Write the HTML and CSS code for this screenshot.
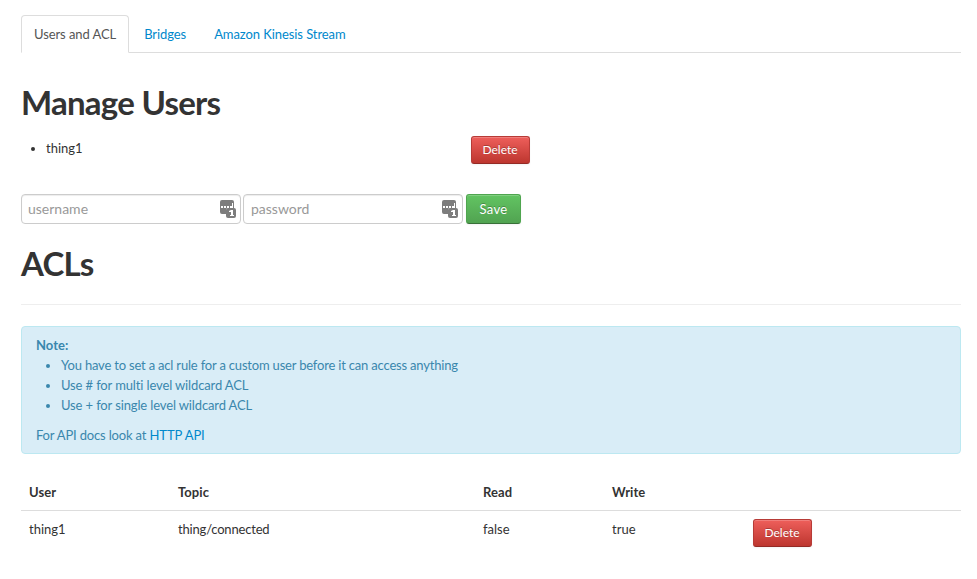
FILE: index.html
```html
<!DOCTYPE html>
<html lang="en">
<head>
<meta charset="utf-8">
<title>Manage Users</title>
<link rel="stylesheet" href="styles.css">
</head>
<body>
<ul class="tabs">
  <li class="active"><a>Users and ACL</a></li>
  <li><a>Bridges</a></li>
  <li><a>Amazon Kinesis Stream</a></li>
</ul>
<h1>Manage Users</h1>
<div class="user-row">
  <ul class="users"><li>thing1</li></ul>
  <button class="btn danger">Delete</button>
</div>
<form class="user-form">
  <label class="field"><input type="text" placeholder="username">
    <svg class="key" width="18" height="20" viewBox="0 0 18 20"><path fill="#7d7d7d" d="M3 1h10q2 0 2 2v6h-6q-2 0-2 2v4H3q-2 0-2-2V3q0-2 2-2z"/><path fill="#fff" d="M2 7h2v2H2zM5 7h2v2H5zM8 7h2v2H8zM11 7h2v2h-2zM13 4h1v5h-1z"/><rect x="7" y="9" width="10" height="10" rx="2" fill="#7d7d7d"/><path fill="#fff" d="M10 12l2-1h2v5h1v1h-4v-1h1v-3h-2z"/></svg></label>
  <label class="field"><input type="text" placeholder="password">
    <svg class="key" width="18" height="20" viewBox="0 0 18 20"><path fill="#7d7d7d" d="M3 1h10q2 0 2 2v6h-6q-2 0-2 2v4H3q-2 0-2-2V3q0-2 2-2z"/><path fill="#fff" d="M2 7h2v2H2zM5 7h2v2H5zM8 7h2v2H8zM11 7h2v2h-2zM13 4h1v5h-1z"/><rect x="7" y="9" width="10" height="10" rx="2" fill="#7d7d7d"/><path fill="#fff" d="M10 12l2-1h2v5h1v1h-4v-1h1v-3h-2z"/></svg></label>
  <button class="btn success" type="button">Save</button>
</form>
<h1 class="acl">ACLs</h1>
<hr>
<div class="note">
  <strong>Note:</strong>
  <ul>
    <li class="long">You have to set a acl rule for a custom user before it can access anything</li>
    <li>Use # for multi level wildcard ACL</li>
    <li>Use + for single level wildcard ACL</li>
  </ul>
  <p>For API docs look at <a>HTTP API</a></p>
</div>
<table>
  <colgroup><col class="c1"><col class="c2"><col class="c3"><col class="c4"><col></colgroup>
  <thead><tr><th>User</th><th>Topic</th><th>Read</th><th>Write</th><th></th></tr></thead>
  <tbody><tr><td>thing1</td><td class="topic">thing/connected</td><td>false</td><td>true</td><td><button class="btn danger">Delete</button></td></tr></tbody>
</table>
</body>
</html>
```
FILE: styles.css
```css
* { box-sizing: border-box; }
body {
  margin: 0;
  padding: 15px 16px 0 21px;
  font: 13px/20px Lato, sans-serif;
  color: #333;
  background: #fff;
}
a { color: #08c; }
.tabs {
  display: flex;
  gap: 2px;
  height: 38px;
  margin: 0 0 29px;
  padding: 0;
  list-style: none;
  border-bottom: 1px solid #ddd;
  letter-spacing: -.08px;
}
.tabs li {
  height: 38px;
  padding: 8px 12px;
  border: 1px solid transparent;
  border-radius: 4px 4px 0 0;
}
.tabs .active { border-color: #ddd #ddd #fff; background: #fff; }
.tabs .active a { color: #555; }
h1 {
  margin: 0 0 14px;
  font-size: 33px;
  line-height: 40px;
  font-weight: 700;
  letter-spacing: -.75px;
}
.user-row { display: flex; height: 58px; }
.users { width: 450px; margin: 2px 0 0; padding: 0 0 0 25px; }
.btn {
  font: 12px/20px Lato, sans-serif;
  color: #fff;
  border: 1px solid;
  border-radius: 3px;
  padding: 3px 11px 3px 10px;
  height: 28px;
  text-shadow: 0 -1px 0 rgba(0,0,0,.25);
  box-shadow: inset 0 1px 0 rgba(255,255,255,.2), 0 1px 2px rgba(0,0,0,.05);
}
.danger {
  width: 59px;
  background: linear-gradient(#ee5f5b, #bd362f);
  border-color: #b73b37 #b73b37 #942a25;
}
.success {
  width: 55px;
  height: 30px;
  font-size: 13px;
  letter-spacing: .3px;
  padding: 4px 11px;
  background: linear-gradient(#62c462, #51a351);
  border-color: #4fa54f #4fa54f #387038;
}
.user-form { display: flex; height: 30px; margin: 0 0 20px; }
.field { position: relative; width: 220px; margin-right: 2px; }
.field + .field { margin-right: 3px; }
.field input {
  display: block;
  width: 100%;
  height: 30px;
  padding: 3px 6px 5px;
  font: 14px/20px Lato, sans-serif;
  color: #555;
  border: 1px solid #ccc;
  border-radius: 4px;
  box-shadow: inset 0 1px 1px rgba(0,0,0,.075);
}
.field + .field input { padding-left: 7px; }
.field input::placeholder { color: #999; }
.key { position: absolute; right: 4px; top: 5px; }
.acl { margin: -1px 0 0; }
hr { margin: 21px 0 20px; border: 0; border-top: 1px solid #eee; border-bottom: 1px solid #fff; }
.note {
  height: 128px;
  padding: 8px 14px;
  margin-bottom: 20px;
  color: #3a87ad;
  background: #d9edf7;
  border: 1px solid #bce8f1;
  border-radius: 4px;
  letter-spacing: -.13px;
}
.note strong { letter-spacing: 0; }
.note .long { letter-spacing: -.19px; }
.note ul { margin: 0 0 10px; padding: 0 0 0 25px; }
.note p { margin: 0; letter-spacing: -.17px; }
.note a { letter-spacing: -.08px; }
table { width: 100%; border-collapse: collapse; table-layout: fixed; }
th, td { padding: 8px; text-align: left; vertical-align: top; }
th { letter-spacing: .08px; }
td { border-top: 1px solid #ddd; }
.topic { letter-spacing: -.18px; }
.c1 { width: 149px; }
.c2 { width: 305px; }
.c3 { width: 129px; }
.c4 { width: 141px; }
td .btn { display: block; }
```
